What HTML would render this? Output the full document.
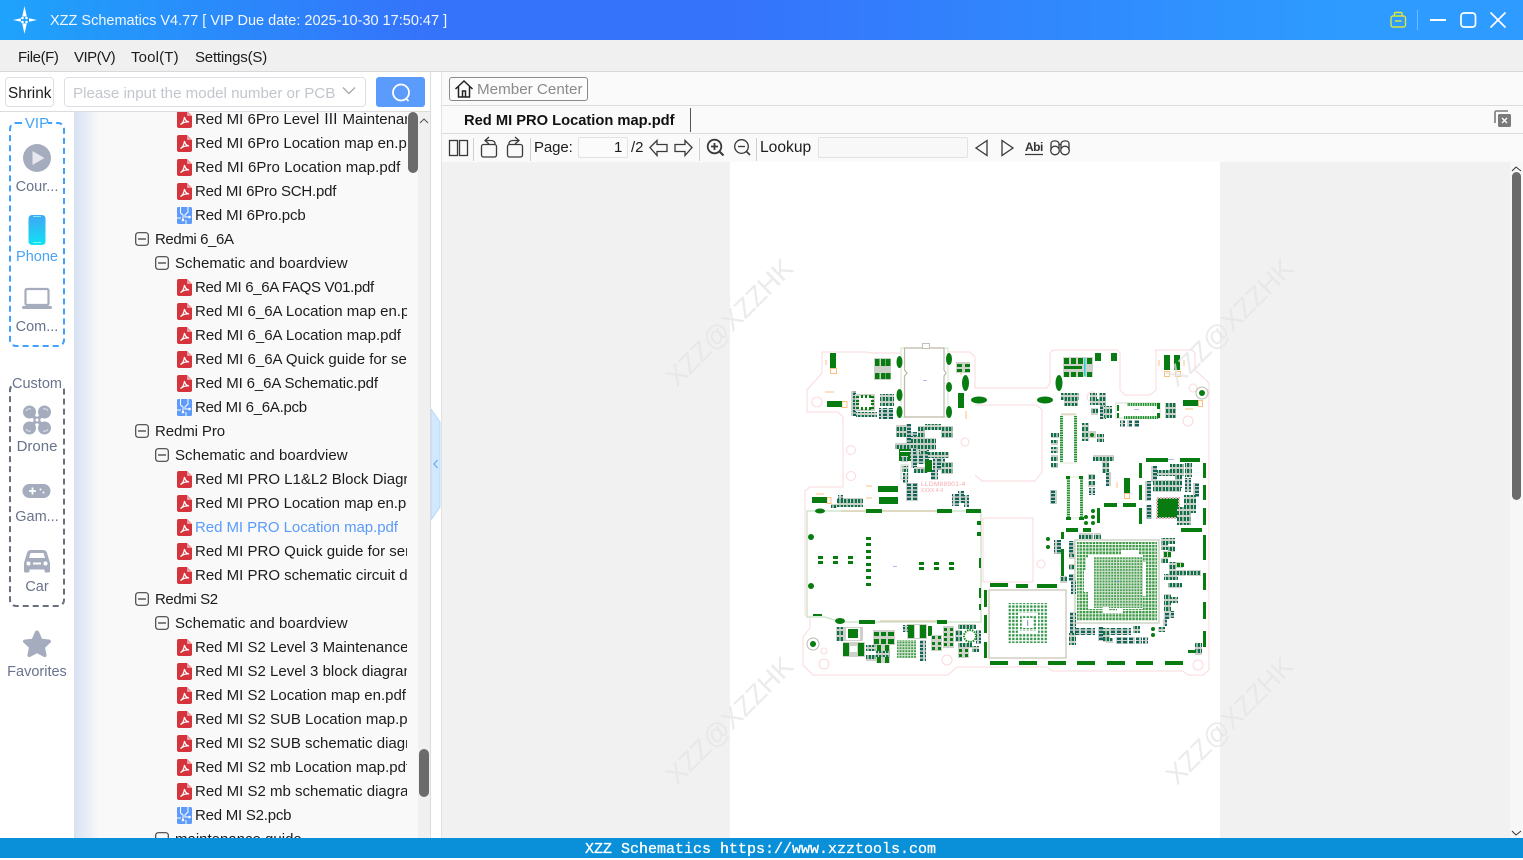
<!DOCTYPE html>
<html><head><meta charset="utf-8"><title>XZZ Schematics</title>
<style>
*{box-sizing:border-box}
html,body{margin:0;padding:0;width:1523px;height:858px;overflow:hidden;background:#fff;font-family:"Liberation Sans","Noto Sans CJK SC",sans-serif;font-size:15px;color:#1c1c1c}
.a{position:absolute}
.t{position:absolute;white-space:nowrap;line-height:20px}
#tree{position:absolute;left:74px;top:112px;width:344px;height:726px;overflow:hidden;background:#f9f9f9}
#tg{position:absolute;left:0;top:0;width:26px;height:726px;background:linear-gradient(to right,#d8e2f3,#f9f9f9)}
.r{position:absolute;height:24px;line-height:26px;white-space:nowrap;overflow:hidden}
.f{left:121px;width:212px}
.g{left:81px}
.s{left:101px}
.i{position:absolute;width:15px;height:17px}
.l{position:absolute;left:0;width:74px;text-align:center;font-size:14.5px;color:#69738c;line-height:20px;white-space:nowrap}
</style></head><body>
<svg width="0" height="0" style="position:absolute"><defs>
<g id="p"><path d="M0 2a2 2 0 0 1 2-2h8l5 5v10a2 2 0 0 1-2 2H2a2 2 0 0 1-2-2z" fill="#d5343d"/><path d="M10 0l5 5h-5z" fill="#ee9a9e"/><path d="M3.500 13.500c2-1 3.500-4 4-7.500 .5 3 2 4.500 4.500 5-3-.5-6 .5-8.500 2.500z" fill="none" stroke="#fff" stroke-width="1.200"/></g>
<g id="b"><rect width="15" height="17" rx="1.500" fill="#5e9bfb"/><path d="M3.500 0v6l2.500 2v5M11 0v5L8 8v2h5M0 11h4M9 13v4" stroke="#fff" stroke-width="1" fill="none"/><circle cx="6" cy="13" r="1.300" fill="#fff"/><circle cx="12.500" cy="10" r="1.300" fill="#fff"/></g>
<g id="m"><rect x=".7" y=".7" width="12.600" height="12.600" rx="2.500" fill="none" stroke="#444" stroke-width="1.200"/><path d="M3 7h8" stroke="#333" stroke-width="1.200"/></g>
<pattern id="cp" width="7" height="6" patternUnits="userSpaceOnUse"><rect width="7" height="6" fill="#ced1c9"/><rect x=".7" y="1" width="2.300" height="4" fill="#0f6f4a"/><rect x="4" y="1" width="2.300" height="4" fill="#0f6f4a"/></pattern>
<pattern id="cq" width="6" height="7" patternUnits="userSpaceOnUse"><rect width="6" height="7" fill="#ced1c9"/><rect x="1" y=".7" width="4" height="2.300" fill="#10655a"/><rect x="1" y="4" width="4" height="2.300" fill="#10655a"/></pattern>
<pattern id="gd" width="3.300" height="3.300" patternUnits="userSpaceOnUse"><rect width="3.300" height="3.300" fill="#fff"/><rect x=".4" y=".4" width="2.500" height="2.500" fill="#3f9a47"/></pattern>
<pattern id="gb" width="2.900" height="2.900" patternUnits="userSpaceOnUse"><rect width="2.900" height="2.900" fill="#cfe3cf"/><rect x=".6" y=".6" width="1.800" height="1.800" fill="#3f9a47"/></pattern>
<pattern id="gs" width="3.600" height="3.600" patternUnits="userSpaceOnUse"><rect x=".6" y=".6" width="2.300" height="2.300" fill="#2f9347"/></pattern>
<pattern id="dv" width="3" height="2.400" patternUnits="userSpaceOnUse"><rect y=".3" width="3" height="1.500" fill="#0e8a1e"/></pattern>
<pattern id="dh" width="2.400" height="3" patternUnits="userSpaceOnUse"><rect x=".3" width="1.500" height="3" fill="#0e8a1e"/></pattern>
</defs></svg>

<!-- title bar -->
<div class="a" style="left:0;top:0;width:1523px;height:40px;background:linear-gradient(to right,#1ea3fb 0,#3573fb 28%,#3573fb 48%,#2d9bff 88%,#2d9bff 100%)"></div>
<svg class="a" style="left:0;top:0" width="50" height="40"><path d="M24.500 6l2.300 10.500h-4.600zM24.500 34l-2.300-10.500h4.600zM13 20l8-1.800v3.600zM37 20l-8-1.800v3.600z" fill="#fff"/><circle cx="22.500" cy="18" r="1.300" fill="#fff"/><circle cx="26.500" cy="18" r="1.300" fill="#fff"/><circle cx="22.500" cy="22" r="1.300" fill="#fff"/><circle cx="26.500" cy="22" r="1.300" fill="#fff"/></svg>
<div class="t" style="left:50px;top:11px;color:#f2f7ff;font-size:14.500px">XZZ Schematics V4.77 [ VIP Due date: 2025-10-30 17:50:47 ]</div>
<svg class="a" style="left:1380px;top:0" width="143" height="40" fill="none"><rect x="11" y="16" width="14.500" height="11" rx="2" stroke="#d9e63a" stroke-width="1.400"/><path d="M14.500 16v-2.500a1 1 0 0 1 1-1h5.500a1 1 0 0 1 1 1V16M15 21h6.500" stroke="#d9e63a" stroke-width="1.400"/><path d="M37.500 10v20" stroke="#6fbcff" stroke-width="1"/><path d="M50 20h16" stroke="#fff" stroke-width="2"/><rect x="81" y="13" width="14.500" height="14" rx="3" stroke="#fff" stroke-width="1.700"/><path d="M110.500 12.500l15 15M125.500 12.500l-15 15" stroke="#fff" stroke-width="1.700"/></svg>

<!-- menu -->
<div class="a" style="left:0;top:40px;width:1523px;height:32px;background:#f0f0f0;border-bottom:1px solid #d8d8d8"></div>
<div class="t" style="left:18px;top:48px;letter-spacing:-.4px">File(F)</div>
<div class="t" style="left:74px;top:48px;letter-spacing:-.5px">VIP(V)</div>
<div class="t" style="left:131px;top:48px;letter-spacing:.15px">Tool(T)</div>
<div class="t" style="left:195px;top:48px;letter-spacing:-.2px">Settings(S)</div>

<!-- search row -->
<div class="a" style="left:0;top:72px;width:431px;height:40px;background:#fff;border-bottom:1px solid #dcdcdc"></div>
<div class="a" style="left:5px;top:77px;width:49px;height:30px;border:1px solid #dcdfe6;border-radius:4px"></div>
<div class="t" style="left:8px;top:84px;font-size:15.300px">Shrink</div>
<div class="a" style="left:64px;top:77px;width:302px;height:30px;border:1px solid #dcdfe6;border-radius:4px"></div>
<div class="t" style="left:73px;top:84px;color:#c2c6cd;font-size:15.130px">Please input the model number or PCB</div>
<svg class="a" style="left:342px;top:86px" width="14" height="10" fill="none"><path d="M1 1.500l6 6 6-6" stroke="#a8abb2" stroke-width="1.400"/></svg>
<div class="a" style="left:376px;top:77px;width:49px;height:30px;background:#5a9bfb;border-radius:3px"></div>
<svg class="a" style="left:389px;top:81px" width="24" height="24" fill="none"><circle cx="12" cy="11.500" r="8" stroke="#fff" stroke-width="1.800"/><path d="M17 17.500l2.500 2.500" stroke="#fff" stroke-width="1.800"/></svg>

<!-- left rail -->
<div class="a" style="left:9px;top:122px;width:56px;height:225px;border:2px dashed #3fa0ff;border-radius:7px"></div>
<div class="a" style="left:26px;top:114px;width:22px;height:18px;background:#fff"></div>
<div class="l" style="top:114px;color:#44a3f9;font-size:15px">VIP</div>
<svg class="a" style="left:22px;top:143px" width="30" height="30"><circle cx="15" cy="15" r="14" fill="#a5acbd"/><path d="M10.500 8l12 7-12 7z" fill="#e6e8ee"/></svg>
<div class="l" style="top:177px">Cour...</div>
<svg class="a" style="left:27px;top:214px" width="20" height="32"><defs><linearGradient id="ph" x1="0" y1="0" x2="0" y2="1"><stop offset="0" stop-color="#3fa6f6"/><stop offset="1" stop-color="#0fe2f3"/></linearGradient></defs><rect x="1.500" y="1" width="17" height="30" rx="3.500" fill="url(#ph)"/><path d="M6 2.500h8M6 28.500h8" stroke="#9fe" stroke-width=".7"/></svg>
<div class="l" style="top:247px;color:#4ba3f5">Phone</div>
<svg class="a" style="left:22px;top:287px" width="30" height="24"><rect x="3.500" y="2" width="23" height="16" rx="1.500" fill="#fff" stroke="#a5acbd" stroke-width="2.200"/><rect y="19" width="30" height="3" rx="1.500" fill="#a5acbd"/></svg>
<div class="l" style="top:317px">Com...</div>

<div class="a" style="left:9px;top:383px;width:56px;height:224px;border:2px dashed #6a6f80;border-radius:7px"></div>
<div class="a" style="left:12px;top:375px;width:50px;height:18px;background:#fff"></div>
<div class="l" style="top:374px">Custom</div>
<svg class="a" style="left:22px;top:404px" width="30" height="32" fill="none"><path d="M8 9l14 14M22 9L8 23" stroke="#a5acbd" stroke-width="3.500"/><g fill="#a5acbd"><circle cx="7.500" cy="8" r="6.500"/><circle cx="22.500" cy="8" r="6.500"/><circle cx="7.500" cy="24" r="6.500"/><circle cx="22.500" cy="24" r="6.500"/></g><path d="M4 7c1-2 3-2.500 5-2M26 7c-1-2-3-2.500-5-2M4 25c1 2 3 2.500 5 2M26 25c-1 2-3 2.500-5 2" stroke="#dfe2e9" stroke-width="1"/><circle cx="15" cy="16" r="3.500" fill="#a5acbd"/><circle cx="15" cy="16" r="1.500" fill="#fff"/></svg>
<div class="l" style="top:437px;font-size:15px">Drone</div>
<svg class="a" style="left:22px;top:483px" width="30" height="16"><rect x=".500" y="1" width="28" height="14" rx="7" fill="#a5acbd"/><path d="M7 8h7M10.500 4.500v7" stroke="#fff" stroke-width="1.800"/><circle cx="18.500" cy="6.500" r="1" fill="#fff"/><circle cx="21.500" cy="9.500" r="1" fill="#fff"/></svg>
<div class="l" style="top:507px">Gam...</div>
<svg class="a" style="left:22px;top:547px" width="30" height="26"><path d="M2 16l3-10c.6-2 2-3 4-3h12c2 0 3.400 1 4 3l3 10v8a1.500 1.500 0 0 1-1.500 1.500h-2.500A1.500 1.500 0 0 1 22.500 24v-1.500h-15V24A1.500 1.500 0 0 1 6 25.500H3.500A1.500 1.500 0 0 1 2 24z" fill="#a5acbd"/><path d="M7 11l1.500-5h13l1.500 5z" fill="#fff"/><circle cx="6.500" cy="16.500" r="2" fill="#fff"/><circle cx="23.500" cy="16.500" r="2" fill="#fff"/><rect x="11" y="15.500" width="8" height="2" fill="#fff"/></svg>
<div class="l" style="top:577px">Car</div>
<svg class="a" style="left:22px;top:630px" width="30" height="30"><path d="M15 .5c1 0 1.700.6 2.200 1.700l2.800 6.500 7 .8c2 .3 2.700 2 1.300 3.300l-5.200 4.900 1.400 7c.4 2-1.200 3-2.900 2.100L15 23.300l-6.600 3.500c-1.700.9-3.300-.1-2.900-2.100l1.400-7-5.200-4.900C.3 11.500 1 9.800 3 9.500l7-.8 2.800-6.500C13.300 1.100 14 .5 15 .5z" fill="#a5acbd"/></svg>
<div class="l" style="top:662px">Favorites</div>

<!-- tree -->
<div id="tree"><div id="tg"></div>
<div class="r f" style="top:-5px">Red MI 6Pro Level Ⅲ Maintenance manual</div>
<div class="r f" style="top:19px">Red MI 6Pro Location map en.pdf</div>
<div class="r f" style="top:43px;letter-spacing:.07px">Red MI 6Pro Location map.pdf</div>
<div class="r f" style="top:67px;letter-spacing:-.2px">Red MI 6Pro SCH.pdf</div>
<div class="r f" style="top:91px;letter-spacing:-.13px">Red MI 6Pro.pcb</div>
<div class="r g" style="top:115px;letter-spacing:-.4px">Redmi 6_6A</div>
<div class="r s" style="top:139px;letter-spacing:.04px">Schematic and boardview</div>
<div class="r f" style="top:163px;letter-spacing:-.33px">Red MI 6_6A FAQS V01.pdf</div>
<div class="r f" style="top:187px">Red MI 6_6A Location map en.pdf</div>
<div class="r f" style="top:211px">Red MI 6_6A Location map.pdf</div>
<div class="r f" style="top:235px">Red MI 6_6A Quick guide for service</div>
<div class="r f" style="top:259px;letter-spacing:-.12px">Red MI 6_6A Schematic.pdf</div>
<div class="r f" style="top:283px;letter-spacing:-.27px">Red MI 6_6A.pcb</div>
<div class="r g" style="top:307px;letter-spacing:-.1px">Redmi Pro</div>
<div class="r s" style="top:331px;letter-spacing:.04px">Schematic and boardview</div>
<div class="r f" style="top:355px">Red MI PRO L1&amp;L2 Block Diagram.pdf</div>
<div class="r f" style="top:379px;letter-spacing:-.05px">Red MI PRO Location map en.pdf</div>
<div class="r f" style="top:403px;color:#5a9bfb;letter-spacing:-.05px">Red MI PRO Location map.pdf</div>
<div class="r f" style="top:427px">Red MI PRO Quick guide for service</div>
<div class="r f" style="top:451px">Red MI PRO schematic circuit diagram</div>
<div class="r g" style="top:475px;letter-spacing:-.4px">Redmi S2</div>
<div class="r s" style="top:499px;letter-spacing:.04px">Schematic and boardview</div>
<div class="r f" style="top:523px">Red MI S2 Level 3 Maintenance manual</div>
<div class="r f" style="top:547px">Red MI S2 Level 3 block diagram.pdf</div>
<div class="r f" style="top:571px">Red MI S2 Location map en.pdf</div>
<div class="r f" style="top:595px">Red MI S2 SUB Location map.pdf</div>
<div class="r f" style="top:619px">Red MI S2 SUB schematic diagram.pdf</div>
<div class="r f" style="top:643px">Red MI S2 mb Location map.pdf</div>
<div class="r f" style="top:667px">Red MI S2 mb schematic diagram.pdf</div>
<div class="r f" style="top:691px;letter-spacing:-.23px">Red MI S2.pcb</div>
<div class="r g" style="top:715px;left:101px">maintenance guide</div>
<svg class="a" style="left:0;top:0" width="344" height="726">
<use href="#p" x="103" y="-1"/><use href="#p" x="103" y="23"/><use href="#p" x="103" y="47"/><use href="#p" x="103" y="71"/><use href="#b" x="103" y="95"/>
<use href="#m" x="61" y="120"/><use href="#m" x="81" y="144"/>
<use href="#p" x="103" y="167"/><use href="#p" x="103" y="191"/><use href="#p" x="103" y="215"/><use href="#p" x="103" y="239"/><use href="#p" x="103" y="263"/><use href="#b" x="103" y="287"/>
<use href="#m" x="61" y="312"/><use href="#m" x="81" y="336"/>
<use href="#p" x="103" y="359"/><use href="#p" x="103" y="383"/><use href="#p" x="103" y="407"/><use href="#p" x="103" y="431"/><use href="#p" x="103" y="455"/>
<use href="#m" x="61" y="480"/><use href="#m" x="81" y="504"/>
<use href="#p" x="103" y="527"/><use href="#p" x="103" y="551"/><use href="#p" x="103" y="575"/><use href="#p" x="103" y="599"/><use href="#p" x="103" y="623"/><use href="#p" x="103" y="647"/><use href="#p" x="103" y="671"/><use href="#b" x="103" y="695"/>
<use href="#m" x="81" y="720"/>
<rect x="334" y="0" width="10" height="61" rx="5" fill="#6b6b6b"/>
</svg></div>
<div class="a" style="left:418px;top:112px;width:12px;height:726px;background:#f0f0f0"></div>
<div class="a" style="left:430px;top:72px;width:1px;height:766px;background:#dcdcdc"></div>
<div class="a" style="left:431px;top:72px;width:10px;height:766px;background:#fff"></div>
<div class="a" style="left:441px;top:72px;width:1px;height:766px;background:#e2e2e2"></div>
<svg class="a" style="left:418px;top:112px" width="12" height="14" fill="none"><path d="M2 11l4-4 4 4" stroke="#555" stroke-width="1"/></svg>
<div class="a" style="left:419px;top:749px;width:10px;height:48px;border-radius:5px;background:#6b6b6b"></div>
<svg class="a" style="left:431px;top:408px" width="10" height="113"><path d="M0 1l9 13v85L0 112z" fill="#d2e8fd" stroke="#b3d8fb" stroke-width="1"/><path d="M6.500 52l-3.500 4 3.500 4" fill="none" stroke="#66aef5" stroke-width="1.300"/></svg>

<!-- right header -->
<div class="a" style="left:442px;top:72px;width:1081px;height:90px;background:#fafafa"></div>
<div class="a" style="left:442px;top:105px;width:1081px;height:1px;background:#dcdcdc"></div>
<div class="a" style="left:442px;top:133px;width:1081px;height:1px;background:#dcdcdc"></div>
<div class="a" style="left:449px;top:77px;width:139px;height:24px;border:1px solid #8a8a8a;border-radius:3px;background:#fcfcfc"></div>
<svg class="a" style="left:454px;top:79px" width="20" height="20" fill="none" stroke="#222" stroke-width="1.500"><path d="M1.500 10L10 2l8.500 8M4.500 8v10h11V8M8.500 18v-6h3v6"/></svg>
<div class="t" style="left:477px;top:80px;color:#8a8a8a;font-size:15.200px">Member Center</div>
<div class="t" style="left:464px;top:111px;font-weight:bold;font-size:14.700px;color:#111">Red MI PRO Location map.pdf</div>
<div class="a" style="left:690px;top:108px;width:1px;height:24px;background:#555"></div>
<svg class="a" style="left:1494px;top:110px" width="18" height="18"><path d="M1 13V2.500C1 1.500 1.500 1 2.500 1H14" fill="none" stroke="#7a7a7a" stroke-width="1.600"/><rect x="4" y="4" width="13" height="13" rx="1.500" fill="#7a7a7a"/><path d="M8 8l5 5M13 8l-5 5" stroke="#fff" stroke-width="1.300"/></svg>

<!-- toolbar -->
<svg class="a" style="left:442px;top:134px" width="640" height="27" fill="none" stroke="#3a3a3a" stroke-width="1.300">
<rect x="7.500" y="6.500" width="8" height="15"/><rect x="17.500" y="6.500" width="8" height="15"/>
<path d="M31.500 4v24M88.500 4v24M257.500 4v24M314.500 4v24" stroke="#d0d0d0" stroke-width="1"/>
<rect x="39.500" y="10.500" width="15" height="12.500" rx="2"/><path d="M53 10V9.500C53 7.500 51 6.500 49 6.500H43M47 3l-4 3.500 4 3.500"/>
<rect x="65.500" y="10.500" width="15" height="12.500" rx="2"/><path d="M67 10V9.500C67 7.500 69 6.500 71 6.500H77M73 3l4 3.500-4 3.500"/>
<path d="M208 13.500l7-7v4h10v7h-10v4z"/><path d="M250 13.500l-7-7v4h-10v7h10v4z"/>
<circle cx="272.500" cy="12.500" r="6.800" stroke-width="1.800"/><path d="M277.500 17.500l4 4" stroke-width="2"/><path d="M269 12.500h7M272.500 9v7" stroke-width="1.800"/>
<circle cx="299.500" cy="12.500" r="6.800"/><path d="M304.500 17.500l3.500 3.500" stroke-width="1.600"/><path d="M296 12.500h7"/>
<path d="M545 6.500l-11 7.500 11 7.500zM560 6.500l11 7.500-11 7.500z"/>
<path d="M583 20.500h18" stroke-width="1.200"/>
<circle cx="613" cy="16.500" r="4.300"/><circle cx="623" cy="16.500" r="4.300"/><path d="M609 16V9.500c0-3.500 7-3.500 8 0V15M619 15V9.500c1-3.500 8-3.500 8 0V16M617 10.500h2"/>
</svg>
<div class="t" style="left:534px;top:138px;letter-spacing:-.1px">Page:</div>
<div class="a" style="left:578px;top:137px;width:50px;height:21px;border:1px solid #e2e2e2;border-radius:2px;background:#fbfbfb"></div>
<div class="t" style="left:614px;top:138px">1</div>
<div class="t" style="left:631px;top:138px">/2</div>
<div class="t" style="left:760px;top:138px;font-size:15.600px">Lookup</div>
<div class="a" style="left:818px;top:137px;width:150px;height:21px;border:1px solid #e2e2e2;border-radius:2px;background:#f8f8f8"></div>
<div class="t" style="left:1025px;top:137px;font-size:12px;font-weight:bold;color:#333;letter-spacing:-.5px">Abi</div>

<!-- view -->
<div class="a" style="left:442px;top:162px;width:1068px;height:676px;background:#f1f1f1"></div>
<div class="a" style="left:730px;top:162px;width:490px;height:676px;background:#fff"></div>
<div class="a" style="left:1510px;top:162px;width:13px;height:676px;background:#f7f7f7"></div>
<svg class="a" style="left:1510px;top:162px" width="13" height="676" fill="none"><path d="M2 9l4-4 5 4" stroke="#333" stroke-width="1"/><path d="M2 669l4 4 5-4" stroke="#333" stroke-width="1"/></svg>
<div class="a" style="left:1512px;top:172px;width:9px;height:328px;border-radius:5px;background:#6b6b6b"></div>

<!-- pcb -->
<svg class="a" style="left:0;top:0" width="1523" height="858">
<g fill="none" stroke="#fbd9db" stroke-width="1">
<path d="M822 352H867L870 353H900M970 352H948M970 352L975 357V388H1047L1050 383V353L1053 350H1117L1120 353V390L1125 395H1150L1156 390V350H1192L1195 353V370L1209 383V670L1203 675H1188L1183 671H1052L1047 667H957L948 675H813L803 665V637L810 628V618L805 615V491L810 487H843V417L838 412H807V390L822 373V352"/>
<path d="M975 405H1037L1042 410V472L1035 481H982L975 475"/>
<path d="M983 518H1033V582H983z"/>
<circle cx="817" cy="402" r="5"/><circle cx="851" cy="450" r="4.500"/><circle cx="851" cy="476" r="4.500"/><circle cx="965" cy="442" r="4"/><circle cx="1092" cy="397" r="5"/><circle cx="1188" cy="421" r="5"/><circle cx="1193" cy="388" r="4"/><circle cx="1041" cy="564" r="4"/><circle cx="824" cy="664" r="5"/><circle cx="947" cy="660" r="5"/><circle cx="1198" cy="665" r="5"/><circle cx="824" cy="651" r="3"/>
</g>
<g fill="none" stroke="#fdbf80" stroke-width="1">
<rect x="830.500" y="368.500" width="6" height="5"/><rect x="842" y="401.500" width="5" height="6"/><rect x="827" y="497.500" width="4" height="6"/><rect x="1164.500" y="371.500" width="5" height="5"/><rect x="1175.500" y="371.500" width="5" height="5"/><rect x="1124.500" y="493.500" width="5" height="5"/><rect x="1198.500" y="400.500" width="4" height="6"/>
<path d="M826 360v5M825 392h9M866 486h6M866 498h6M816 494h8M961 370v5M966 411v8M1159 360v6M1184 360v6M1185 409h8M1117 482v6"/></g>
<!-- connector top -->
<rect x="901" y="348" width="47" height="69" fill="#fff" stroke="#cfe3c9"/>
<path d="M904.500 348V370L907 373L904.500 376V417H944V376L946 373L944 370V348z" fill="#fff" stroke="#bdb8a7" stroke-width="1.200"/>
<rect x="922.500" y="343.500" width="7" height="5" fill="#fff" stroke="#bdc5b2"/>
<g fill="#087c10">
<ellipse cx="899.500" cy="362" rx="3" ry="6"/><ellipse cx="899.500" cy="395" rx="3" ry="6"/><ellipse cx="899.500" cy="412" rx="3" ry="6"/><ellipse cx="949" cy="359" rx="3" ry="6"/><ellipse cx="949" cy="387" rx="3" ry="5"/><ellipse cx="949" cy="412" rx="3" ry="6"/><ellipse cx="965.500" cy="383" rx="3.500" ry="8"/><ellipse cx="979" cy="400" rx="8" ry="3.500"/><ellipse cx="1059" cy="383" rx="3.500" ry="8"/><ellipse cx="1045" cy="400" rx="8" ry="3.500"/>
<rect x="830" y="353" width="6" height="15"/><rect x="827" y="401" width="15" height="6"/><rect x="958" y="393" width="6" height="15"/><rect x="812" y="497" width="15" height="6"/>
<rect x="878" y="486" width="20" height="6"/><rect x="879" y="497" width="19" height="7"/>
<rect x="1164" y="355" width="6" height="15"/><rect x="1174" y="355" width="6" height="15"/><rect x="1183" y="400" width="15" height="6"/><rect x="1095" y="353" width="6" height="8"/><rect x="1111" y="353" width="6" height="8"/><rect x="1124" y="478" width="6" height="15"/>
</g>
<rect x="874" y="358" width="17" height="22" fill="#ced1c9"/>
<path d="M875 359h4.500v7h-4.500zM881 359h4.500v7h-4.500zM886 359h4.500v7h-4.500zM875 373h4.500v6h-4.500zM881 373h4.500v6h-4.500zM886 373h4.500v6h-4.500z" fill="#087c10"/>
<rect x="956" y="362" width="14" height="11" fill="#ced1c9"/><path d="M957 364h5v3h-5zM965 364h5v3h-5zM957 369h5v3h-5zM965 369h5v3h-5z" fill="#087c10"/>
<rect x="1063" y="357" width="30" height="20" fill="#ced1c9"/>
<path d="M1064 358h5v6h-5zM1071 358h5v6h-5zM1078 358h5v6h-5zM1087 358h5v6h-5zM1064 372h5v5h-5zM1071 372h5v5h-5zM1078 372h5v5h-5zM1087 372h5v5h-5zM1064 366h18v3h-18z" fill="#087c10"/><rect x="1084" y="358" width="1.500" height="18" fill="#24d4da"/>
<!-- top-left cluster -->
<rect x="851" y="391" width="5" height="25" fill="url(#cq)"/><rect x="855" y="394" width="20" height="17" fill="#ced1c9"/><rect x="859" y="396" width="13" height="13" fill="#fff"/><path d="M856 396h3v2h-3zM856 400h3v2h-3zM856 403h3v2h-3zM856 407h3v2h-3zM871 396h3v2h-3zM871 400h3v2h-3zM871 403h3v2h-3zM871 407h3v2h-3z" fill="#087c10"/><path d="M861 395h2v3h-2zM865 395h2v3h-2zM869 395h2v3h-2zM861 407h2v3h-2zM865 407h2v3h-2zM869 407h2v3h-2z" fill="#087c10"/>
<rect x="856" y="412" width="21" height="5" fill="url(#cp)"/><rect x="880" y="394" width="14" height="12" fill="url(#cp)"/><rect x="879" y="408" width="14" height="11" fill="url(#cq)"/>
<!-- mid cluster -->
<rect x="896" y="425" width="14" height="12" fill="url(#cp)"/><rect x="906" y="424" width="5" height="14" fill="url(#cq)"/><rect x="918" y="426" width="7" height="12" fill="url(#cp)"/><rect x="925" y="424" width="16" height="6" fill="url(#cp)"/><rect x="941" y="426" width="12" height="12" fill="url(#cp)"/>
<rect x="906" y="432" width="11" height="18" fill="url(#cq)"/><rect x="911" y="436" width="7" height="18" fill="url(#cp)"/><rect x="918" y="438" width="18" height="12" fill="url(#cp)"/><rect x="895" y="443" width="18" height="6" fill="url(#cp)"/><rect x="899" y="449" width="12" height="12" fill="#087c10"/><rect x="900" y="451" width="10" height="1" fill="#fff"/><rect x="910" y="448" width="6" height="12" fill="url(#cq)"/>
<rect x="911" y="454" width="6" height="14" fill="url(#cq)"/><rect x="917" y="450" width="12" height="14" fill="url(#cq)"/><rect x="920" y="448" width="7" height="6" fill="url(#cp)"/><rect x="928" y="452" width="21" height="6" fill="url(#cp)"/><rect x="901" y="456" width="7" height="6" fill="url(#cp)"/>
<rect x="901" y="465" width="7" height="14" fill="#fff" stroke="#ced1c9"/><rect x="902" y="466" width="6" height="6" fill="url(#cp)"/><rect x="914" y="467" width="14" height="6" fill="url(#cp)"/><rect x="925" y="460" width="7" height="12" fill="#087c10"/><rect x="933" y="458" width="12" height="12" fill="url(#cq)"/><rect x="941" y="462" width="12" height="12" fill="url(#cp)"/>
<rect x="903" y="473" width="5" height="10" fill="url(#cq)"/><rect x="906" y="483" width="12" height="18" fill="url(#cq)"/>
<rect x="931" y="470" width="7" height="10" fill="url(#cq)"/>
<rect x="837" y="498" width="26" height="9" fill="url(#cp)"/><rect x="838" y="495" width="5" height="4" fill="url(#cq)"/><rect x="831" y="504" width="6" height="4" fill="url(#cp)"/>
<rect x="952" y="494" width="7" height="12" fill="url(#cq)"/><rect x="958" y="491" width="6" height="12" fill="url(#cq)"/><rect x="964" y="495" width="5" height="12" fill="url(#cq)"/>
<text x="921" y="486" font-size="6.500" fill="#f7a9ad" letter-spacing=".3" font-family="Liberation Sans,sans-serif">LLDM88901-4</text>
<text x="921" y="492" font-size="5" fill="#f7a9ad" font-family="Liberation Sans,sans-serif">XXXX 4-X</text>
<!-- top right clusters -->
<rect x="1061" y="393" width="18" height="7" fill="url(#cp)"/><rect x="1064" y="399" width="14" height="7" fill="url(#cp)"/>
<rect x="1116" y="403" width="44" height="15" fill="#fff" stroke="#d4d8cd"/><rect x="1127" y="403" width="31" height="3" fill="url(#dh)"/><rect x="1124" y="416" width="34" height="3" fill="url(#dh)"/><rect x="1117" y="405" width="2" height="6" fill="#087c10"/><rect x="1117" y="413" width="2" height="5" fill="#087c10"/><rect x="1157" y="403" width="3" height="6" fill="#087c10"/><rect x="1157" y="413" width="3" height="5" fill="#087c10"/>
<rect x="1120" y="420" width="5" height="7" fill="url(#cq)"/><rect x="1127" y="420" width="5" height="7" fill="url(#cq)"/><rect x="1134" y="420" width="5" height="7" fill="url(#cq)"/>
<rect x="1165" y="403" width="11" height="15" fill="url(#cp)"/>
<rect x="1090" y="393" width="7" height="6" fill="url(#cp)"/><rect x="1090" y="399" width="14" height="6" fill="url(#cp)"/><rect x="1091" y="408" width="7" height="7" fill="url(#cp)"/><rect x="1100" y="405" width="6" height="14" fill="url(#cq)"/><rect x="1104" y="406" width="8" height="12" fill="url(#cp)"/><rect x="1099" y="393" width="7" height="12" fill="url(#cp)"/>
<rect x="1082" y="423" width="7" height="18" fill="url(#cp)"/><rect x="1088" y="431" width="8" height="7" fill="#ced1c9"/><circle cx="1092" cy="435" r="2" fill="#087c10"/><rect x="1097" y="434" width="7" height="8" fill="url(#cp)"/>
<!-- flex 1 -->
<rect x="1061" y="415" width="15" height="48" fill="#fff" stroke="#dfe7d6"/><rect x="1060" y="416" width="3" height="46" fill="url(#dv)"/><rect x="1074" y="416" width="3" height="46" fill="url(#dv)"/><path d="M1061 414h15" stroke="#e6c9a8" stroke-width="1"/>
<rect x="1051" y="433" width="8" height="5" fill="url(#cp)"/><rect x="1051" y="440" width="7" height="5" fill="url(#cp)"/><rect x="1051" y="447" width="7" height="6" fill="url(#cp)"/><rect x="1051" y="455" width="7" height="6" fill="url(#cp)"/><rect x="1051" y="463" width="7" height="5" fill="url(#cp)"/>
<!-- flex 2 -->
<rect x="1067" y="477" width="15" height="41" fill="#fff" stroke="#dfe7d6"/><rect x="1067" y="478" width="3" height="39" fill="url(#dv)"/><rect x="1080" y="478" width="3" height="39" fill="url(#dv)"/><rect x="1066" y="476" width="4" height="3" fill="#087c10"/><rect x="1079" y="476" width="4" height="3" fill="#087c10"/><rect x="1066" y="517" width="5" height="3" fill="#087c10"/><rect x="1079" y="517" width="5" height="3" fill="#087c10"/>
<rect x="1050" y="490" width="7" height="14" fill="url(#cq)"/><rect x="1088" y="474" width="7" height="6" fill="url(#cp)"/><rect x="1088" y="481" width="7" height="6" fill="url(#cp)"/><rect x="1089" y="488" width="6" height="7" fill="url(#cq)"/>
<rect x="1093" y="455" width="21" height="6" fill="url(#cp)"/><rect x="1102" y="461" width="7" height="12" fill="url(#cp)"/><rect x="1106" y="472" width="5" height="14" fill="url(#cq)"/>
<!-- right region -->
<g fill="#087c10"><path d="M1146 458h22v4h-22zM1180 458h20v4h-20zM1139 463h3v15h-3zM1139 485h3v15h-3zM1203 463h3v15h-3zM1203 485h3v15h-3zM1104 503h13v4h-13zM1123 503h13v4h-13zM1066 528h12v4h-12zM1083 528h8v4h-8zM1181 528h21v4h-21zM1061 532h3v7h-3zM1097 508h3v15h-3zM1139 508h3v16h-3zM1061 549h3v33h-3zM1016 584h12v4h-12zM1037 584h20v4h-20zM1019 661h18v4h-18zM1048 661h18v4h-18zM1077 661h18v4h-18zM1107 661h18v4h-18zM1136 661h17v4h-17zM1165 661h18v4h-18zM1203 535h3v25h-3zM1203 573h3v17h-3zM1203 602h3v17h-3zM1203 631h3v16h-3zM1203 508h3v17h-3zM1188 650h14v3h-14z"/>
<circle cx="1086" cy="517" r="2"/><circle cx="1093" cy="511" r="2"/><circle cx="1093" cy="517" r="2"/><circle cx="1086" cy="523" r="2"/><circle cx="1093" cy="523" r="2"/><circle cx="1048" cy="539" r="2"/><circle cx="1048" cy="547" r="2"/><circle cx="1153" cy="629" r="2"/><circle cx="1153" cy="635" r="2"/></g>
<rect x="1157" y="498" width="22" height="20" fill="#087c10" stroke="#e0b4c6" stroke-width="2" stroke-dasharray="2 1"/>
<rect x="1145" y="481" width="6" height="20" fill="url(#cq)"/><rect x="1151" y="466" width="6" height="16" fill="url(#cq)"/><rect x="1153" y="480" width="28" height="12" fill="url(#cp)"/><rect x="1157" y="470" width="14" height="6" fill="url(#cp)"/><rect x="1170" y="464" width="14" height="12" fill="url(#cp)"/><rect x="1185" y="463" width="7" height="14" fill="url(#cp)"/><rect x="1185" y="478" width="6" height="14" fill="url(#cq)"/><rect x="1175" y="476" width="7" height="12" fill="url(#cp)"/><rect x="1193" y="483" width="6" height="14" fill="url(#cq)"/><rect x="1184" y="495" width="12" height="18" fill="url(#cp)"/><rect x="1146" y="505" width="6" height="14" fill="url(#cq)"/>
<rect x="1177" y="507" width="14" height="18" fill="url(#cp)"/><rect x="1079" y="533" width="14" height="6" fill="url(#cp)"/><rect x="1094" y="533" width="7" height="6" fill="url(#cp)"/>
<!-- main BGA -->
<rect x="1075" y="540" width="84" height="83" fill="#fff" stroke="#cfd3c3" stroke-width="1.500"/>
<rect x="1077" y="542" width="80" height="79" fill="url(#gd)"/>
<rect x="1088" y="555" width="55" height="54" fill="#fff"/>
<rect x="1094" y="557" width="49" height="51" fill="url(#gb)"/>
<path d="M1086 558h6v8h-4v4h4v30h-4v-8h-4v-22h2zM1103 607h6v4h8v-3h6v5h-20z" fill="#fff"/>
<rect x="1121" y="550" width="18" height="5" fill="#fff"/>
<rect x="1143" y="562" width="3" height="34" fill="#fff"/>
<rect x="1054" y="540" width="7" height="14" fill="url(#cq)"/><rect x="1071" y="580" width="5" height="14" fill="url(#cq)"/><rect x="1060" y="576" width="7" height="7" fill="url(#cp)"/><rect x="1069" y="574" width="6" height="7" fill="url(#cq)"/>
<rect x="1069" y="541" width="6" height="14" fill="url(#cq)"/><rect x="1069" y="554" width="6" height="5" fill="url(#cp)"/><rect x="1069" y="564" width="6" height="6" fill="url(#cp)"/>
<rect x="1070" y="612" width="6" height="21" fill="url(#cq)"/><rect x="1076" y="628" width="5" height="7" fill="url(#cq)"/><rect x="1081" y="628" width="14" height="7" fill="url(#cq)"/><rect x="1069" y="633" width="7" height="12" fill="url(#cp)"/>
<rect x="1098" y="627" width="5" height="14" fill="url(#cq)"/><rect x="1103" y="628" width="7" height="14" fill="url(#cp)"/><rect x="1110" y="628" width="21" height="7" fill="url(#cq)"/><rect x="1133" y="626" width="7" height="7" fill="url(#cp)"/><rect x="1106" y="638" width="7" height="5" fill="url(#cp)"/>
<rect x="1116" y="637" width="6" height="7" fill="url(#cq)"/><rect x="1122" y="637" width="6" height="7" fill="url(#cq)"/><rect x="1129" y="637" width="6" height="7" fill="url(#cq)"/><rect x="1136" y="637" width="6" height="7" fill="url(#cq)"/><rect x="1143" y="637" width="5" height="7" fill="url(#cq)"/>
<rect x="1161" y="538" width="14" height="6" fill="url(#cp)"/><rect x="1161" y="544" width="7" height="6" fill="url(#cp)"/><rect x="1168" y="546" width="7" height="6" fill="url(#cp)"/><rect x="1163" y="551" width="8" height="7" fill="#ced1c9"/><rect x="1164" y="552" width="3" height="5" fill="#087c10"/><rect x="1168" y="552" width="3" height="5" fill="#087c10"/><rect x="1161" y="558" width="7" height="5" fill="url(#cp)"/>
<rect x="1169" y="562" width="7" height="12" fill="url(#cp)"/><rect x="1176" y="562" width="7" height="6" fill="#ced1c9"/><rect x="1177" y="563" width="3" height="4" fill="#087c10"/><rect x="1181" y="563" width="3" height="4" fill="#087c10"/><rect x="1172" y="570" width="14" height="6" fill="url(#cp)"/><rect x="1164" y="574" width="14" height="6" fill="url(#cp)"/><rect x="1187" y="570" width="14" height="6" fill="url(#cp)"/><rect x="1168" y="583" width="14" height="5" fill="url(#cp)"/>
<rect x="1164" y="594" width="7" height="12" fill="url(#cp)"/><rect x="1171" y="597" width="7" height="6" fill="url(#cp)"/><rect x="1164" y="606" width="7" height="6" fill="url(#cp)"/><rect x="1164" y="612" width="6" height="7" fill="url(#cq)"/><rect x="1169" y="611" width="5" height="7" fill="url(#cq)"/><rect x="1163" y="619" width="4" height="7" fill="url(#cq)"/><rect x="1158" y="627" width="7" height="5" fill="url(#cp)"/><rect x="1195" y="643" width="7" height="12" fill="url(#cp)"/>
<!-- big shield -->
<g fill="none"><path d="M807 511H981V622H840L825 617H807z" stroke="#cfe5cf" stroke-width="1.500"/><path d="M841 511H866M882 511H937M880 621H937" stroke="#d9ccab" stroke-width="1.200"/></g>
<g fill="#087c10"><ellipse cx="820" cy="511" rx="5" ry="2.500"/><ellipse cx="840" cy="621" rx="5" ry="3"/><rect x="866" y="509" width="16" height="4"/><rect x="937" y="509" width="15" height="4"/><rect x="966" y="509" width="15" height="4"/><rect x="859" y="620" width="16" height="4"/><rect x="937" y="620" width="10" height="4"/><rect x="813" y="614" width="9" height="2"/><circle cx="811" cy="537" r="3"/><circle cx="811" cy="586" r="3"/><rect x="977" y="521" width="4" height="4"/><rect x="977" y="532" width="4" height="4"/><rect x="979" y="558" width="2" height="10"/><rect x="979" y="588" width="2" height="10"/><rect x="979" y="604" width="2" height="6"/>
<path d="M818 556h5v3h-5zM818 561h5v3h-5zM833 556h5v3h-5zM833 561h5v3h-5zM848 556h5v3h-5zM848 561h5v3h-5zM919 562h5v3h-5zM919 567h5v3h-5zM934 562h5v3h-5zM934 567h5v3h-5zM949 562h5v3h-5zM949 567h5v3h-5zM866 537h5v3h-5zM866 543h5v3h-5zM866 550h5v3h-5zM866 556h5v3h-5zM866 563h5v3h-5zM866 569h5v3h-5zM866 576h5v3h-5zM866 583h5v3h-5z"/>
<path d="M984 590h3v17h-3zM984 615h3v18h-3zM984 642h3v16h-3zM990 583h18v4h-18zM990 661h18v4h-18z"/><circle cx="813" cy="644" r="3"/><circle cx="1202" cy="393" r="3"/></g>
<circle cx="813" cy="644" r="6" fill="none" stroke="#b9bdb1"/><circle cx="1202" cy="393" r="6" fill="none" stroke="#b9bdb1"/>
<!-- small BGA -->
<rect x="989" y="590" width="77" height="68" fill="#fff" stroke="#c7c2b4" stroke-width="1.200"/>
<rect x="1008" y="603" width="40" height="40" fill="url(#gs)"/><rect x="1018" y="613" width="20" height="20" fill="#fff"/><rect x="1020" y="615" width="16" height="16" fill="url(#gs)"/><rect x="1023" y="618" width="10" height="10" fill="#fff"/><rect x="1027" y="620" width="1.200" height="6" fill="#9a9ae0"/>
<!-- bottom row -->
<rect x="843" y="642" width="22" height="15" fill="#ced1c9"/><rect x="843" y="643" width="6" height="13" fill="#087c10"/><rect x="858" y="643" width="6" height="13" fill="#087c10"/><rect x="850" y="646" width="7" height="6" fill="#fff"/>
<rect x="843" y="627" width="20" height="14" fill="#ced1c9"/><rect x="846" y="628" width="14" height="12" fill="#fff"/><rect x="848" y="629" width="10" height="9" fill="#087c10"/>
<rect x="836" y="627" width="7" height="14" fill="url(#cp)"/>
<rect x="873" y="630" width="22" height="15" fill="#ced1c9"/><path d="M874 632h5v4h-5zM881 632h5v4h-5zM888 632h6v4h-6zM874 639h5v5h-5zM881 639h5v5h-5zM888 639h6v5h-6z" fill="#087c10"/>
<rect x="866" y="645" width="11" height="6" fill="url(#cp)"/><rect x="876" y="645" width="14" height="6" fill="#ced1c9"/><path d="M877 645h4v6h-4zM885 645h4v6h-4z" fill="#087c10"/><rect x="876" y="651" width="14" height="6" fill="url(#cp)"/><rect x="866" y="655" width="11" height="6" fill="url(#cp)"/><rect x="876" y="657" width="14" height="6" fill="#ced1c9"/><path d="M877 657h4v6h-4zM885 657h4v6h-4z" fill="#087c10"/>
<rect x="897" y="640" width="19" height="18" fill="url(#gb)"/><rect x="907" y="624" width="20" height="15" fill="#ced1c9"/><rect x="908" y="625" width="6" height="13" fill="#087c10"/><rect x="920" y="625" width="6" height="13" fill="#087c10"/><rect x="915" y="625" width="4" height="13" fill="#fff"/>
<rect x="903" y="625" width="5" height="7" fill="url(#cq)"/><rect x="928" y="626" width="4" height="10" fill="#087c10"/><rect x="920" y="640" width="6" height="21" fill="url(#cq)"/><rect x="931" y="635" width="11" height="16" fill="#ced1c9"/><path d="M932 636h3v3h-3zM938 636h3v3h-3zM932 642h3v3h-3zM938 642h3v3h-3zM932 647h3v3h-3zM938 647h3v3h-3z" fill="#087c10"/>
<rect x="943" y="626" width="11" height="22" fill="#ced1c9"/><path d="M944 628h3v3h-3zM950 628h3v3h-3zM944 633h3v3h-3zM950 633h3v3h-3zM944 638h3v3h-3zM950 638h3v3h-3zM944 643h3v3h-3zM950 643h3v3h-3z" fill="#087c10"/>
<rect x="958" y="624" width="18" height="5" fill="url(#cp)"/><rect x="955" y="630" width="7" height="12" fill="url(#cp)"/><rect x="976" y="630" width="5" height="14" fill="url(#cq)"/><circle cx="970" cy="636" r="6" fill="none" stroke="#0e8a1e" stroke-width="2" stroke-dasharray="1.500 1"/><rect x="958" y="643" width="14" height="5" fill="url(#cp)"/><rect x="972" y="646" width="7" height="6" fill="url(#cp)"/>
<rect x="958" y="648" width="11" height="10" fill="#ced1c9"/><path d="M959 649h3v3h-3zM965 649h3v3h-3zM959 654h3v3h-3zM965 654h3v3h-3z" fill="#087c10"/>
<g fill="#7e8be0" opacity=".6"><rect x="923" y="380" width="4" height="1"/><rect x="893" y="566" width="4" height="1"/><rect x="1116" y="581" width="4" height="1"/><rect x="1134" y="409" width="5" height="1"/><rect x="1168" y="459" width="6" height="1"/></g>
<!-- watermarks -->
<g font-family="Liberation Sans,sans-serif" font-size="27" fill="#e4e4e4" fill-opacity=".75" text-anchor="middle">
<text transform="translate(736,329) rotate(-45)">XZZ@XZZHK</text>
<text transform="translate(1236,329) rotate(-45)">XZZ@XZZHK</text>
<text transform="translate(736,727) rotate(-45)">XZZ@XZZHK</text>
<text transform="translate(1236,727) rotate(-45)">XZZ@XZZHK</text>
</g>
</svg>

<!-- status bar -->
<div class="a" style="left:0;top:838px;width:1523px;height:20px;background:#0a90d8"></div>
<div class="t" style="left:585px;top:840px;font-family:'Liberation Mono',monospace;font-size:15px;color:#fff;-webkit-text-stroke:.3px #fff">XZZ Schematics https://www.xzztools.com</div>
</body></html>
